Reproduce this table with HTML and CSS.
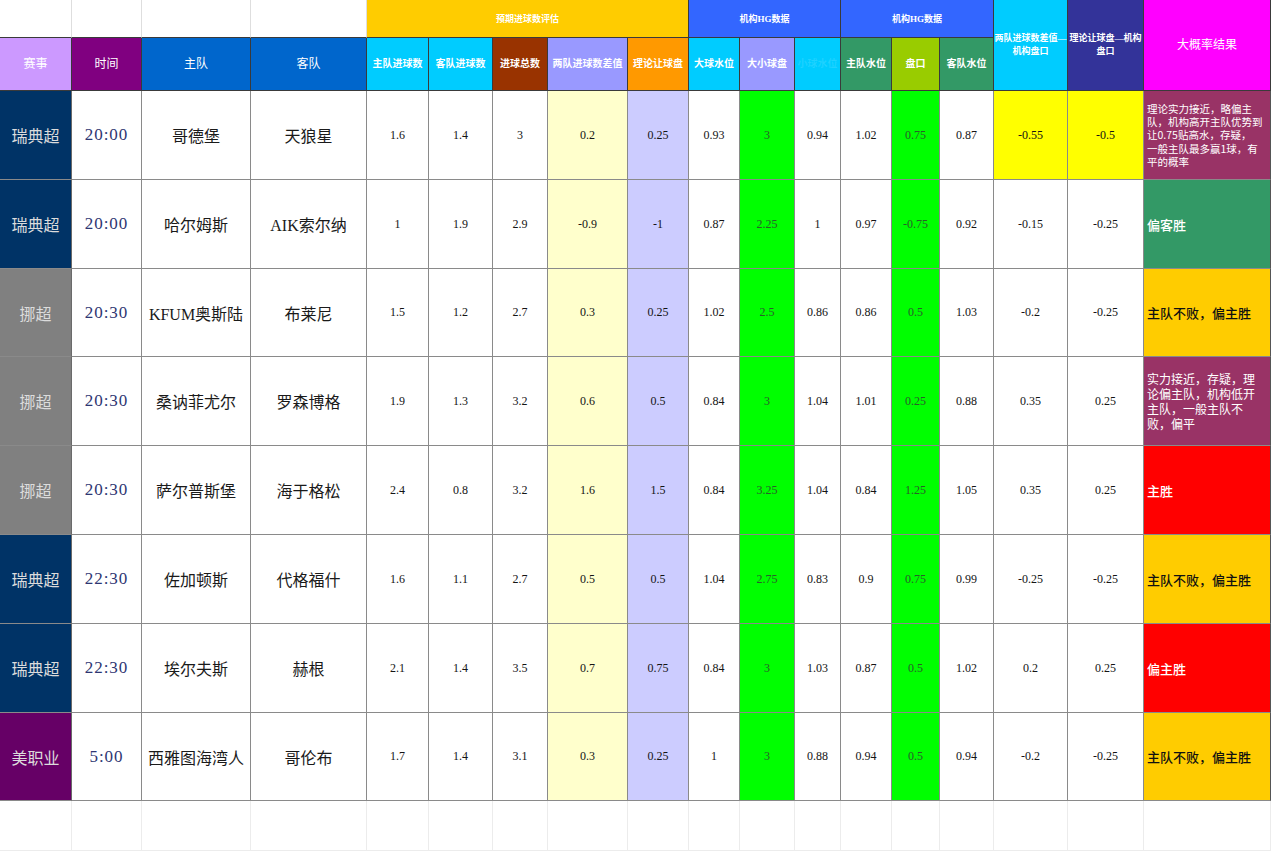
FILE: index.html
```html
<!DOCTYPE html>
<html lang="zh">
<head>
<meta charset="utf-8">
<title>赛事分析表</title>
<link rel="stylesheet" href="styles.css">
</head>
<body>
<div class="sheet">
  <!-- header row 1 -->
  <div class="c blank-top"></div>
  <div class="c blank-top"></div>
  <div class="c blank-top"></div>
  <div class="c blank-top"></div>
  <div class="c h grp gold span5">预期进球数评估</div>
  <div class="c h grp blue span3">机构HG数据</div>
  <div class="c h grp blue span3">机构HG数据</div>
  <div class="c h tall cyan rows2">两队进球数差值—<br>机构盘口</div>
  <div class="c h tall navyh rows2">理论让球盘—机构<br>盘口</div>
  <div class="c h big magenta rows2">大概率结果</div>

  <!-- header row 2 -->
  <div class="c h main lilac">赛事</div>
  <div class="c h main purple">时间</div>
  <div class="c h main royal">主队</div>
  <div class="c h main royal">客队</div>
  <div class="c h cyan">主队进球数</div>
  <div class="c h cyan">客队进球数</div>
  <div class="c h brown">进球总数</div>
  <div class="c h periw">两队进球数差值</div>
  <div class="c h orange">理论让球盘</div>
  <div class="c h cyan">大球水位</div>
  <div class="c h periw">大小球盘</div>
  <div class="c h cyan faint">小球水位</div>
  <div class="c h seagreen">主队水位</div>
  <div class="c h olive">盘口</div>
  <div class="c h seagreen">客队水位</div>

  <!-- row 1 -->
  <div class="c lg se">瑞典超</div><div class="c tm">20:00</div><div class="c tn">哥德堡</div><div class="c tn">天狼星</div>
  <div class="c n">1.6</div><div class="c n">1.4</div><div class="c n">3</div><div class="c n yl">0.2</div><div class="c n lv">0.25</div>
  <div class="c n">0.93</div><div class="c n gr">3</div><div class="c n">0.94</div><div class="c n">1.02</div><div class="c n gr">0.75</div><div class="c n">0.87</div>
  <div class="c n ye">-0.55</div><div class="c n ye">-0.5</div>
  <div class="c res maroon small">理论实力接近，略偏主<br>队，机构高开主队优势到<br>让0.75贴高水，存疑，<br>一般主队最多赢1球，有<br>平的概率</div>

  <!-- row 2 -->
  <div class="c lg se">瑞典超</div><div class="c tm">20:00</div><div class="c tn">哈尔姆斯</div><div class="c tn">AIK索尔纳</div>
  <div class="c n">1</div><div class="c n">1.9</div><div class="c n">2.9</div><div class="c n yl">-0.9</div><div class="c n lv">-1</div>
  <div class="c n">0.87</div><div class="c n gr">2.25</div><div class="c n">1</div><div class="c n">0.97</div><div class="c n gr">-0.75</div><div class="c n">0.92</div>
  <div class="c n">-0.15</div><div class="c n">-0.25</div>
  <div class="c res green one">偏客胜</div>

  <!-- row 3 -->
  <div class="c lg no">挪超</div><div class="c tm">20:30</div><div class="c tn">KFUM奥斯陆</div><div class="c tn">布莱尼</div>
  <div class="c n">1.5</div><div class="c n">1.2</div><div class="c n">2.7</div><div class="c n yl">0.3</div><div class="c n lv">0.25</div>
  <div class="c n">1.02</div><div class="c n gr">2.5</div><div class="c n">0.86</div><div class="c n">0.86</div><div class="c n gr">0.5</div><div class="c n">1.03</div>
  <div class="c n">-0.2</div><div class="c n">-0.25</div>
  <div class="c res amber one">主队不败，偏主胜</div>

  <!-- row 4 -->
  <div class="c lg no">挪超</div><div class="c tm">20:30</div><div class="c tn">桑讷菲尤尔</div><div class="c tn">罗森博格</div>
  <div class="c n">1.9</div><div class="c n">1.3</div><div class="c n">3.2</div><div class="c n yl">0.6</div><div class="c n lv">0.5</div>
  <div class="c n">0.84</div><div class="c n gr">3</div><div class="c n">1.04</div><div class="c n">1.01</div><div class="c n gr">0.25</div><div class="c n">0.88</div>
  <div class="c n">0.35</div><div class="c n">0.25</div>
  <div class="c res maroon mid">实力接近，存疑，理<br>论偏主队，机构低开<br>主队，一般主队不<br>败，偏平</div>

  <!-- row 5 -->
  <div class="c lg no">挪超</div><div class="c tm">20:30</div><div class="c tn">萨尔普斯堡</div><div class="c tn">海于格松</div>
  <div class="c n">2.4</div><div class="c n">0.8</div><div class="c n">3.2</div><div class="c n yl">1.6</div><div class="c n lv">1.5</div>
  <div class="c n">0.84</div><div class="c n gr">3.25</div><div class="c n">1.04</div><div class="c n">0.84</div><div class="c n gr">1.25</div><div class="c n">1.05</div>
  <div class="c n">0.35</div><div class="c n">0.25</div>
  <div class="c res red one">主胜</div>

  <!-- row 6 -->
  <div class="c lg se">瑞典超</div><div class="c tm">22:30</div><div class="c tn">佐加顿斯</div><div class="c tn">代格福什</div>
  <div class="c n">1.6</div><div class="c n">1.1</div><div class="c n">2.7</div><div class="c n yl">0.5</div><div class="c n lv">0.5</div>
  <div class="c n">1.04</div><div class="c n gr">2.75</div><div class="c n">0.83</div><div class="c n">0.9</div><div class="c n gr">0.75</div><div class="c n">0.99</div>
  <div class="c n">-0.25</div><div class="c n">-0.25</div>
  <div class="c res amber one">主队不败，偏主胜</div>

  <!-- row 7 -->
  <div class="c lg se">瑞典超</div><div class="c tm">22:30</div><div class="c tn">埃尔夫斯</div><div class="c tn">赫根</div>
  <div class="c n">2.1</div><div class="c n">1.4</div><div class="c n">3.5</div><div class="c n yl">0.7</div><div class="c n lv">0.75</div>
  <div class="c n">0.84</div><div class="c n gr">3</div><div class="c n">1.03</div><div class="c n">0.87</div><div class="c n gr">0.5</div><div class="c n">1.02</div>
  <div class="c n">0.2</div><div class="c n">0.25</div>
  <div class="c res red one">偏主胜</div>

  <!-- row 8 -->
  <div class="c lg us">美职业</div><div class="c tm">5:00</div><div class="c tn">西雅图海湾人</div><div class="c tn">哥伦布</div>
  <div class="c n">1.7</div><div class="c n">1.4</div><div class="c n">3.1</div><div class="c n yl">0.3</div><div class="c n lv">0.25</div>
  <div class="c n">1</div><div class="c n gr">3</div><div class="c n">0.88</div><div class="c n">0.94</div><div class="c n gr">0.5</div><div class="c n">0.94</div>
  <div class="c n">-0.2</div><div class="c n">-0.25</div>
  <div class="c res amber one">主队不败，偏主胜</div>

  <!-- empty row -->
  <div class="c e"></div><div class="c e"></div><div class="c e"></div><div class="c e"></div>
  <div class="c e"></div><div class="c e"></div><div class="c e"></div><div class="c e"></div><div class="c e"></div>
  <div class="c e"></div><div class="c e"></div><div class="c e"></div><div class="c e"></div><div class="c e"></div><div class="c e"></div>
  <div class="c e"></div><div class="c e"></div><div class="c e"></div>
</div>
</body>
</html>
```

FILE: styles.css
```css
html, body {
  margin: 0;
  padding: 0;
  background: #ffffff;
}

.sheet {
  display: grid;
  grid-template-columns: 72px 70px 109px 116px 62px 64px 55px 80px 61px 51px 55px 46px 51px 48px 54px 74px 76px 127px;
  grid-template-rows: 38px 53px 89px 89px 88px 89px 89px 89px 89px 88px 50px;
  width: 1271px;
  font-family: "Liberation Serif", "Noto Sans CJK SC", serif;
}

.c {
  box-sizing: border-box;
  border-right: 1px solid #8a8a8a;
  border-bottom: 1px solid #8a8a8a;
  display: flex;
  align-items: center;
  justify-content: center;
  text-align: center;
  overflow: hidden;
  background: #ffffff;
  color: #111111;
}

/* header */
.blank-top {
  border-right-color: #dedede;
  border-bottom-color: #3a3a3a;
}
.h {
  color: #ffffff;
  font-family: "Liberation Serif", "Noto Sans CJK SC", serif;
  font-size: 10px;
  font-weight: 700;
  border-right-color: #3a3a3a;
  border-bottom-color: #3a3a3a;
  line-height: 14px;
}
.h.main { font-size: 12px; font-weight: 400; }
.h.grp { font-size: 9px; }
.h.tall {
  font-size: 9px;
  line-height: 13px;
  white-space: nowrap;
  padding: 0;
}
.h.big { font-size: 12px; font-weight: 400; }
.h.faint { color: rgba(255, 255, 255, 0.12); }
.span5 { grid-column: span 5; }
.span3 { grid-column: span 3; }
.rows2 { grid-row: span 2; }

.gold { background: #ffcc00; }
.blue { background: #3366ff; }
.cyan { background: #00ccff; }
.navyh { background: #333399; }
.magenta { background: #ff00ff; }
.lilac { background: #cc99ff; }
.purple { background: #800080; }
.royal { background: #0066cc; }
.brown { background: #993300; }
.periw { background: #9999ff; }
.orange { background: #ff9900; }
.seagreen { background: #339966; }
.olive { background: #99cc00; }

/* data */
.lg {
  color: #dcdcdc;
  font-size: 16px;
  font-family: "Noto Sans CJK SC", sans-serif;
  border-right-color: #6a6a6a;
}
.se { background: #003366; }
.no { background: #808080; }
.us { background: #660066; }

.tm {
  color: #2e3672;
  font-size: 17px;
  letter-spacing: 1px;
}
.tn {
  font-size: 16px;
  color: #1a1a1a;
}
.n {
  font-size: 12px;
  color: #141414;
}
.yl { background: #ffffcc; }
.lv { background: #ccccff; }
.gr { background: #00ff00; color: #2a5e2a; }
.ye { background: #ffff00; }

.res {
  justify-content: flex-start;
  text-align: left;
  padding: 0 3px;
  font-family: "Noto Sans CJK SC", sans-serif;
  font-weight: 700;
  color: #ffffff;
  border-right-color: #555555;
}
.res.small { font-size: 10.5px; line-height: 13.3px; font-weight: 400; }
.res.mid { font-size: 12px; line-height: 15px; font-weight: 400; }
.res.one { font-size: 13px; font-weight: 500; }
.maroon { background: #993366; }
.green { background: #339966; }
.amber { background: #ffcc00; color: #111111; }
.red { background: #ff0000; }

.e {
  border-right-color: #ececec;
  border-bottom-color: #ececec;
}
```
